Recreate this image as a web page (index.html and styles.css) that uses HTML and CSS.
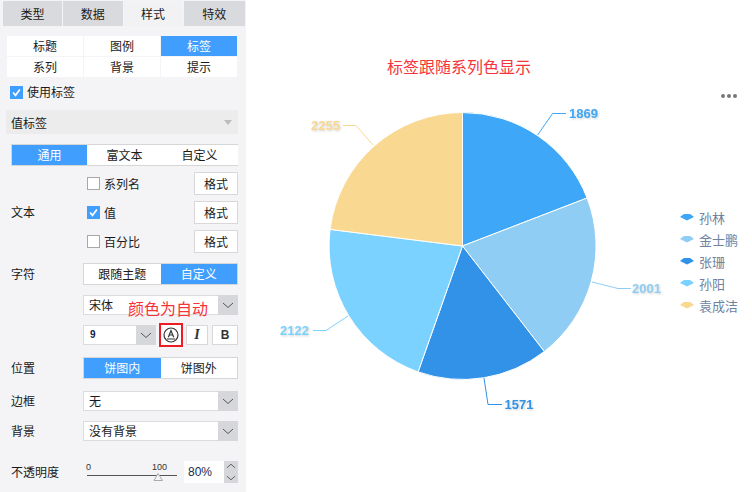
FILE: index.html
```html
<!DOCTYPE html>
<html lang="zh">
<head>
<meta charset="utf-8">
<title>标签</title>
<link rel="stylesheet" href="styles.css">
</head>
<body>
<div class="page">
  <aside class="panel">
    <div class="tabs">
      <div class="tab">类型</div>
      <div class="tab">数据</div>
      <div class="tab on">样式</div>
      <div class="tab">特效</div>
    </div>
    <div class="subtabs">
      <div class="st">标题</div><div class="st">图例</div><div class="st on">标签</div>
      <div class="st">系列</div><div class="st">背景</div><div class="st">提示</div>
    </div>
    <label class="use"><span class="cb checked"><svg viewBox="0 0 13 13"><path d="M2.5 6.5 5.3 9.8 10.5 3" /></svg></span>使用标签</label>
    <div class="sect"><span>值标签</span><i class="tri"></i></div>
    <div class="seg seg3">
      <div class="sg on">通用</div><div class="sg">富文本</div><div class="sg">自定义</div>
    </div>
    <div class="textgroup">
      <div class="lbl">文本</div>
      <div class="tgrows">
        <div class="tgrow"><span class="cb"></span><span class="tgname">系列名</span><button class="fmt">格式</button></div>
        <div class="tgrow"><span class="cb checked"><svg viewBox="0 0 13 13"><path d="M2.5 6.5 5.3 9.8 10.5 3" /></svg></span><span class="tgname">值</span><button class="fmt">格式</button></div>
        <div class="tgrow"><span class="cb"></span><span class="tgname">百分比</span><button class="fmt">格式</button></div>
      </div>
    </div>
    <div class="row r-char">
      <div class="lbl">字符</div>
      <div class="seg seg2"><div class="sg">跟随主题</div><div class="sg on">自定义</div></div>
    </div>
    <div class="row r-font">
      <div class="lbl"></div>
      <div class="sel"><span>宋体</span><b class="arr"><svg viewBox="0 0 20 20"><path d="M5 8 10 12.5 15 8"/></svg></b></div>
    </div>
    <div class="row r-tools">
      <div class="lbl"></div>
      <div class="sel size"><span>9</span><b class="arr"><svg viewBox="0 0 20 20"><path d="M5 8 10 12.5 15 8"/></svg></b></div>
      <button class="tool color"><svg viewBox="0 0 16 16"><circle cx="8" cy="8" r="7"/><path d="M5.3 10.2 8 3.6 10.7 10.2M6.300 8H9.700M3.800 12H12.200"/></svg></button>
      <button class="tool it">I</button>
      <button class="tool bd">B</button>
      <div class="note">颜色为自动</div>
    </div>
    <div class="row r-pos">
      <div class="lbl">位置</div>
      <div class="seg seg2"><div class="sg on">饼图内</div><div class="sg">饼图外</div></div>
    </div>
    <div class="row r-border">
      <div class="lbl">边框</div>
      <div class="sel"><span>无</span><b class="arr"><svg viewBox="0 0 20 20"><path d="M5 8 10 12.5 15 8"/></svg></b></div>
    </div>
    <div class="row r-bg">
      <div class="lbl">背景</div>
      <div class="sel"><span>没有背景</span><b class="arr"><svg viewBox="0 0 20 20"><path d="M5 8 10 12.5 15 8"/></svg></b></div>
    </div>
    <div class="row r-op">
      <div class="lbl">不透明度</div>
      <div class="slider">
        <div class="ticks"><span>0</span><span>100</span></div>
        <svg class="sl" viewBox="0 0 92 10"><path class="track" d="M1 3.500H91"/><path class="thumb" d="M68 8.500 72 1.500 76.500 8.500Z"/></svg>
      </div>
      <div class="spin"><span>80%</span><b class="updown"><svg viewBox="0 0 14 24"><path d="M2.500 7.500 7 3.500 11.500 7.500M2.500 16.500 7 20.500 11.500 16.500"/></svg></b></div>
    </div>
  </aside>
  <main class="chart">
    <div class="title">标签跟随系列色显示</div>
    <div class="dots"><i></i><i></i><i></i></div>
    <svg class="pie" viewBox="0 0 506 492" aria-hidden="true">
      <g transform="translate(216.500 246)" stroke="#fff" stroke-width="1">
        <path fill="#3fa7f8" d="M0 0V-133.500A133.500 133.500 0 0 1 124.600 -48Z"/>
        <path fill="#90cdf4" d="M0 0L124.600 -48A133.500 133.500 0 0 1 81.800 105.500Z"/>
        <path fill="#3192e8" d="M0 0L81.800 105.500A133.500 133.500 0 0 1 -44.400 125.900Z"/>
        <path fill="#7bd2fe" d="M0 0L-44.400 125.900A133.500 133.500 0 0 1 -132.400 -16.600Z"/>
        <path fill="#f9d892" d="M0 0L-132.400 -16.600A133.500 133.500 0 0 1 0 -133.500Z"/>
      </g>
      <g fill="none" stroke-width="1">
        <path stroke="#3fa7f8" d="M291.700 135 L306.500 113.500 H320"/>
        <path stroke="#90cdf4" d="M346 282 L372 288.500 H385"/>
        <path stroke="#3192e8" d="M238 378 L242 404.500 H256"/>
        <path stroke="#7bd2fe" d="M102 316 L80 330.500 H67"/>
        <path stroke="#f9d892" d="M127 145 L110 125.500 H97"/>
      </g>
      <g class="vals">
        <text class="v1" x="323" y="118">1869</text>
        <text class="v2" x="386" y="293">2001</text>
        <text class="v3" x="258.500" y="409">1571</text>
        <text class="v4" x="34" y="335">2122</text>
        <text class="v5" x="65" y="130">2255</text>
      </g>
    </svg>
    <ul class="legend">
      <li><i class="k1"></i>孙林</li>
      <li><i class="k2"></i>金士鹏</li>
      <li><i class="k3"></i>张珊</li>
      <li><i class="k4"></i>孙阳</li>
      <li><i class="k5"></i>袁成洁</li>
    </ul>
  </main>
</div>
</body>
</html>
```
FILE: styles.css
```css
* { box-sizing: border-box; }
html, body { margin: 0; padding: 0; background: #fff; }
body { font-family: "Noto Sans CJK SC", "Liberation Sans", sans-serif; font-size: 12px; color: #1a1a1a; }
.page { display: flex; width: 752px; height: 492px; overflow: hidden; }
.panel { width: 246px; flex: none; background: #f4f4f6; padding: 1px 8px 0 3px; font-size: 12px; }
.tabs { display: flex; gap: 1px; margin-right: -7px; height: 25px; }
.tab { width: 60px; background: #d9dadd; display: flex; align-items: center; justify-content: center; }
.tab.on { background: #f2f2f5; }
.tabs .tab:nth-child(4) { width: 62px; }
.subtabs { display: grid; grid-template-columns: 76px 76px 76px; gap: 1px; margin: 10px 0 0 4px; width: 231px; }
.st { height: 20px; padding-bottom: 2px; background: #fff; display: flex; align-items: center; justify-content: center; }
.st.on { background: #409eff; color: #fff; }
.use { display: flex; align-items: flex-start; gap: 4px; margin: 9px 0 0 7px; height: 13px; line-height: 11px; }
.cb { width: 13px; height: 13px; background: #fff; border: 1px solid #a8a8a8; display: inline-block; flex: none; }
.cb.checked { background: #409eff; border-color: #409eff; }
.cb svg { display: block; width: 11px; height: 11px; fill: none; stroke: #fff; stroke-width: 2; }
.sect { display: flex; justify-content: space-between; align-items: center; background: #ececec; height: 24px; margin: 11px 0 0 3px; padding: 0 6px 0 5px; width: 232px; }
.tri { width: 0; height: 0; border-left: 4px solid transparent; border-right: 4px solid transparent; border-top: 5px solid #bcbcbc; }
.seg { display: flex; background: #fff; border: 1px solid #d6d6d6; height: 22px; }
.sg { flex: 1; padding-bottom: 1px; display: flex; align-items: center; justify-content: center; }
.sg.on { background: #409eff; color: #fff; }
.seg3 { margin: 10px 0 0 8px; width: 227px; border-width: 1px 0 1px 1px; }
.seg3 .sg { flex: none; width: 75px; }
.textgroup { display: flex; align-items: center; margin: 0 0 0 8px; }
.textgroup .lbl { width: 76px; flex: none; padding-top: 4px; }
.tgrows { width: 151px; display: flex; flex-direction: column; gap: 6px; padding-top: 6px; }
.tgrow { display: flex; align-items: center; height: 23px; }
.tgname { margin-left: 4px; flex: 1; }
.fmt { width: 44px; height: 23px; background: #fff; border: 1px solid #d8d8d8; font: inherit; color: inherit; padding: 0; }
.row { display: flex; align-items: center; margin-left: 8px; position: relative; }
.row > .seg, .row > .sel:not(.size) { width: 155px; }
.row .lbl { width: 72px; flex: none; padding-bottom: 2px; }
.r-char { margin-top: 10px; height: 22px; }
.r-font { margin-top: 10px; height: 20px; }
.r-tools { margin-top: 10px; height: 20px; }
.r-pos { margin-top: 12px; height: 22px; }
.r-border { margin-top: 12px; height: 20px; }
.r-bg { margin-top: 10px; height: 20px; }
.r-op { margin-top: 20px; height: 22px; }
.sel { display: flex; align-items: stretch; justify-content: space-between; background: #fff; height: 20px; border: 1px solid #dcdcdc; border-right: 0; }
.sel span { padding-left: 5px; line-height: 18px; }
.arr { width: 20px; background: #d6d7da; display: block; flex: none; margin: -1px 0; }
.arr svg { display: block; width: 20px; height: 20px; fill: none; stroke: #555; stroke-width: 1; }
.size { width: 73px; font-family: "Liberation Sans", sans-serif; font-size: 10px; font-weight: bold; color: #15204a; }
.size span { padding-left: 6px; }
.tool { width: 22px; height: 20px; flex: none; background: #fff; border: 1px solid #d8d8d8; padding: 0; margin-left: 3px; font: bold 12px "Liberation Sans", sans-serif; color: #333; display: flex; align-items: center; justify-content: center; }
.tool.color { border: 2px solid #ee1c25; width: 24px; height: 24px; }
.tool.color svg { width: 16px; height: 16px; fill: none; stroke: #333; stroke-width: 1.2; }
.tool.it { font-style: italic; font-family: "Liberation Serif", serif; font-size: 14px; }
.tool.bd { width: 26px; margin-left: 4px; }
.note { position: absolute; left: 117px; top: -27px; color: #f7333a; font-size: 16px; line-height: 20px; white-space: nowrap; }
.slider { width: 92px; margin-left: 3px; margin-right: 6px; align-self: flex-start; padding-top: 1px; }
.ticks { display: flex; justify-content: space-between; font: 9px/10px "Liberation Sans", sans-serif; color: #333; padding-right: 11px; }
.sl { display: block; width: 92px; height: 10px; }
.track { stroke: #555; stroke-width: 1; fill: none; }
.thumb { fill: #f4f4f6; stroke: #aaa; }
.spin { width: 54px; height: 22px; display: flex; background: #fff; justify-content: space-between; }
.spin span { padding-left: 4px; line-height: 22px; font-size: 12px; color: #1a2a50; font-family: "Liberation Sans", sans-serif; }
.updown { width: 14px; background: #d6d7da; display: block; }
.updown svg { display: block; width: 14px; height: 22px; fill: none; stroke: #555; stroke-width: 1; }
.chart { position: relative; flex: 1; background: #fff; }
.title { position: absolute; left: 141px; top: 56px; color: #f7333a; font-size: 16px; line-height: 20px; white-space: nowrap; }
.dots { position: absolute; left: 475px; top: 94px; display: flex; gap: 2px; }
.dots i { width: 4px; height: 4px; border-radius: 50%; background: #777; }
.pie { position: absolute; left: 0; top: 0; width: 506px; height: 492px; }
.vals text { font: bold 13px "Liberation Sans", sans-serif; filter: drop-shadow(1px 1px 1px rgba(0, 0, 0, .18)); }
.v1 { fill: #3fa7f8; }
.v2 { fill: #90cdf4; }
.v3 { fill: #3192e8; }
.v4 { fill: #7bd2fe; }
.v5 { fill: #f9d892; }
.legend { position: absolute; left: 434px; top: 206px; margin: 0; padding: 0; list-style: none; color: #6f83a0; font-size: 13px; }
.legend li { display: flex; align-items: center; height: 22px; white-space: nowrap; }
.legend i { width: 14px; height: 7px; margin-right: 5px; clip-path: polygon(0 50%, 25% 10%, 50% 0, 75% 10%, 100% 50%, 50% 100%); }
.k1 { background: #3fa7f8; }
.k2 { background: #90cdf4; }
.k3 { background: #3192e8; }
.k4 { background: #7bd2fe; }
.k5 { background: #f9d892; }
```
